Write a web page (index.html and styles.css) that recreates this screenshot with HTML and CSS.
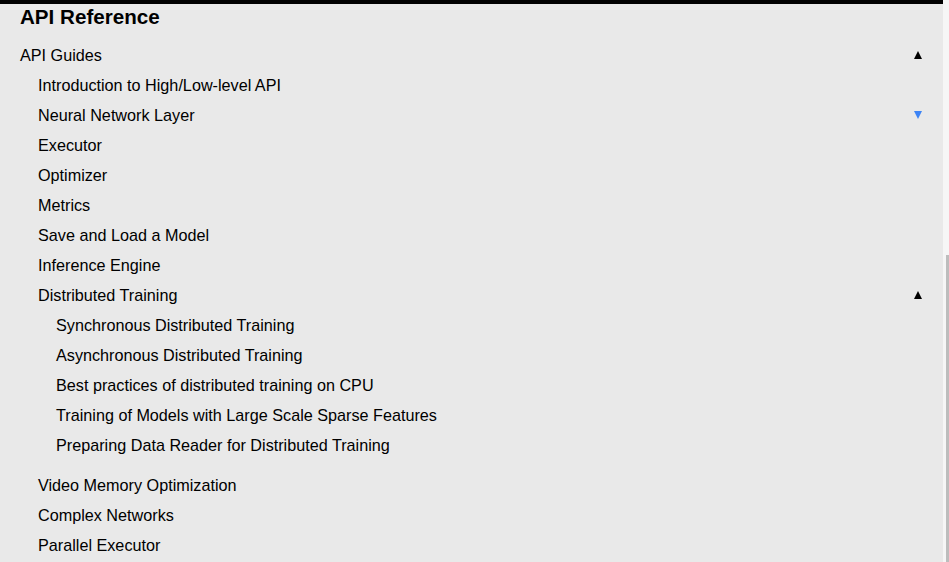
FILE: index.html
```html
<!DOCTYPE html>
<html lang="en">
<head>
  <meta charset="UTF-8">
  <title>API Reference</title>
  <link rel="stylesheet" href="styles.css">
</head>
<body>
  <div class="panel">
    <div class="topbar"></div>
    <h2 class="title">API Reference</h2>
    <ul class="nav">
      <li class="item lv1"><span>API Guides</span><i class="arrow up"></i></li>
      <li class="item lv2"><span>Introduction to High/Low-level API</span></li>
      <li class="item lv2"><span>Neural Network Layer</span><i class="arrow down"></i></li>
      <li class="item lv2"><span>Executor</span></li>
      <li class="item lv2"><span>Optimizer</span></li>
      <li class="item lv2"><span>Metrics</span></li>
      <li class="item lv2"><span>Save and Load a Model</span></li>
      <li class="item lv2"><span>Inference Engine</span></li>
      <li class="item lv2"><span>Distributed Training</span><i class="arrow up"></i></li>
      <li class="sub">
        <ul class="nav">
          <li class="item lv3"><span>Synchronous Distributed Training</span></li>
          <li class="item lv3"><span>Asynchronous Distributed Training</span></li>
          <li class="item lv3"><span>Best practices of distributed training on CPU</span></li>
          <li class="item lv3"><span>Training of Models with Large Scale Sparse Features</span></li>
          <li class="item lv3"><span>Preparing Data Reader for Distributed Training</span></li>
        </ul>
      </li>
      <li class="item lv2"><span>Video Memory Optimization</span></li>
      <li class="item lv2"><span>Complex Networks</span></li>
      <li class="item lv2"><span>Parallel Executor</span></li>
    </ul>
  </div>
  <div class="scroll"><div class="thumb"></div></div>
</body>
</html>
```
FILE: styles.css
```css
body {
  margin: 0;
  display: flex;
  height: 562px;
  overflow: hidden;
  font-family: "Liberation Sans", Arial, sans-serif;
  color: #000;
  background: #e9e9e9;
}
.panel {
  width: 943px;
  background: #e9e9e9;
}
.topbar {
  height: 4px;
  background: #000;
}
.title {
  margin: 0 0 11px;
  padding: 1px 0 0 20px;
  height: 24px;
  font-size: 20.6px;
  line-height: 24px;
  font-weight: bold;
}
.nav {
  list-style: none;
  margin: 0;
  padding: 0;
}
.item {
  height: 30px;
  display: flex;
  align-items: center;
  justify-content: space-between;
  padding-right: 21px;
  font-size: 16.2px;
}
.lv1 { padding-left: 20px; }
.lv2 { padding-left: 38px; }
.lv3 { padding-left: 56px; }
.sub {
  margin-bottom: 10px;
}
.arrow {
  width: 0;
  height: 0;
  border-left: 4px solid transparent;
  border-right: 4px solid transparent;
}
.arrow.up {
  border-bottom: 8px solid #000;
}
.arrow.down {
  border-top: 8px solid #3d84f5;
}
.scroll {
  width: 6px;
  background: #f6f6f6;
  display: flex;
  justify-content: flex-end;
}
.thumb {
  width: 3px;
  margin-top: 255px;
  height: 320px;
  background: #bdbdbd;
}
```
